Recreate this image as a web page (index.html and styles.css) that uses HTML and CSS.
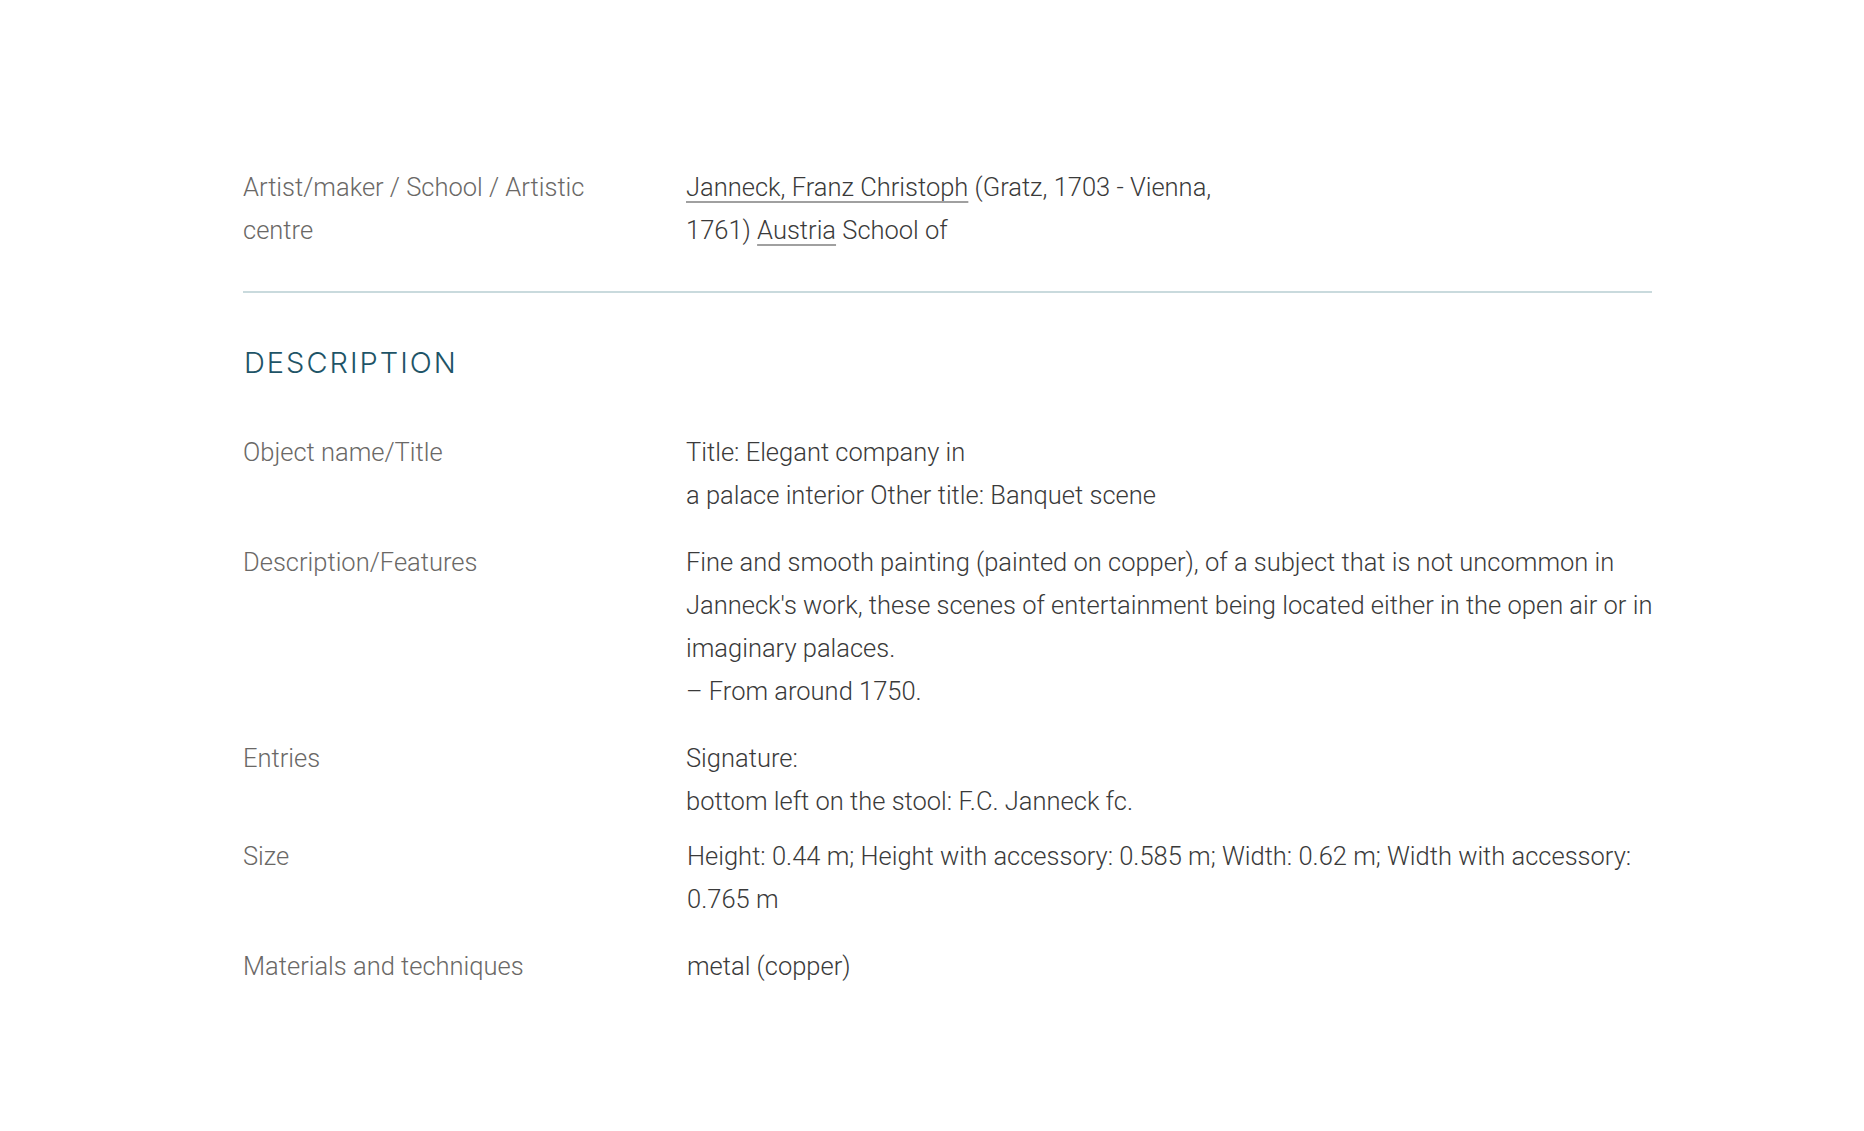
FILE: index.html
```html
<!DOCTYPE html>
<html lang="en">
<head>
<meta charset="utf-8">
<title>Elegant company in a palace interior</title>
<link rel="stylesheet" href="styles.css">
</head>
<body>
<main class="record">
  <section class="block block-top">
    <div class="row">
      <div class="label">Artist/maker / School / Artistic centre</div>
      <div class="value value-narrow"><a href="#">Janneck, Franz Christoph</a> (Gratz, 1703 - Vienna, 1761) <a href="#">Austria</a> School of</div>
    </div>
  </section>
  <section class="block">
    <h2 class="heading">DESCRIPTION</h2>
    <div class="row">
      <div class="label">Object name/Title</div>
      <div class="value">Title: Elegant company in<br>a palace interior Other title: Banquet scene</div>
    </div>
    <div class="row">
      <div class="label">Description/Features</div>
      <div class="value">Fine and smooth painting (painted on copper), of a subject that is not uncommon in Janneck's work, these scenes of entertainment being located either in the open air or in imaginary palaces.<br>– From around 1750.</div>
    </div>
    <div class="row row-tight">
      <div class="label">Entries</div>
      <div class="value">Signature:<br>bottom left on the stool: F.C. Janneck fc.</div>
    </div>
    <div class="row">
      <div class="label">Size</div>
      <div class="value value-shift">Height: 0.44 m; Height with accessory: 0.585 m; Width: 0.62 m; Width with accessory: 0.765 m</div>
    </div>
    <div class="row">
      <div class="label">Materials and techniques</div>
      <div class="value value-shift">metal (copper)</div>
    </div>
  </section>
</main>
</body>
</html>
```
FILE: styles.css
```css
html, body {
  margin: 0;
  padding: 0;
  background: #ffffff;
}
body {
  font-family: Roboto, "Liberation Sans", sans-serif;
  font-weight: 300;
  font-size: 25.5px;
  line-height: 43px;
  color: #3a3a3a;
}
.record {
  width: 1409px;
  margin-left: 243px;
  padding-top: 166px;
}
.block-top {
  padding-bottom: 39px;
  border-bottom: 2px solid #c9dadd;
}
.row {
  display: grid;
  grid-template-columns: 443px 1fr;
  margin-bottom: 24px;
  margin-right: -14px;
}
.row-tight {
  margin-bottom: 12px;
}
.block-top .row {
  margin-bottom: 0;
}
.label {
  color: #6a6866;
  padding-right: 70px;
}
.value {
  color: #3a3a3a;
}
.value-narrow {
  max-width: 560px;
}
.value-shift {
  padding-left: 1px;
}
.value a {
  color: #3a3a3a;
  text-decoration: underline;
  text-decoration-color: #a0a0a0;
  text-decoration-thickness: 2px;
  text-underline-offset: 5px;
}
.heading {
  font-family: Inter, "Open Sans", sans-serif;
  font-weight: 300;
  font-size: 29px;
  line-height: 40px;
  color: #1e5467;
  margin: 50px 0 48px 1px;
  letter-spacing: 2px;
}
```
